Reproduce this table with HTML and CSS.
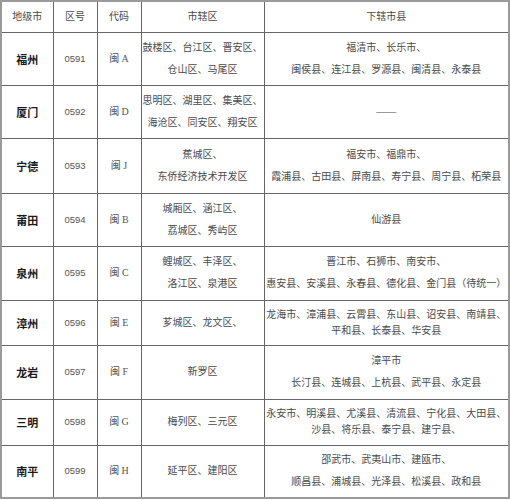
FILE: index.html
```html
<!DOCTYPE html>
<html lang="zh-CN">
<head>
<meta charset="utf-8">
<title>福建省地级市</title>
<link rel="stylesheet" href="styles.css">
</head>
<body>
<table class="fj">
  <colgroup>
    <col class="c1"><col class="c2"><col class="c3"><col class="c4"><col class="c5">
  </colgroup>
  <thead>
    <tr class="h">
      <th>地级市</th><th>区号</th><th>代码</th><th>市辖区</th><th>下辖市县</th>
    </tr>
  </thead>
  <tbody>
    <tr class="r53">
      <td class="city">福州</td><td class="num">0591</td><td class="code">闽 A</td>
      <td>鼓楼区、台江区、晋安区、<br>仓山区、马尾区</td>
      <td>福清市、长乐市、<br>闽侯县、连江县、罗源县、闽清县、永泰县</td>
    </tr>
    <tr class="r53">
      <td class="city">厦门</td><td class="num">0592</td><td class="code">闽 D</td>
      <td>思明区、湖里区、集美区、<br>海沧区、同安区、翔安区</td>
      <td>——</td>
    </tr>
    <tr class="r55">
      <td class="city">宁德</td><td class="num">0593</td><td class="code">闽 J</td>
      <td>蕉城区、<br>东侨经济技术开发区</td>
      <td>福安市、福鼎市、<br>霞浦县、古田县、屏南县、寿宁县、周宁县、柘荣县</td>
    </tr>
    <tr class="r53">
      <td class="city">莆田</td><td class="num">0594</td><td class="code">闽 B</td>
      <td>城厢区、涵江区、<br>荔城区、秀屿区</td>
      <td>仙游县</td>
    </tr>
    <tr class="r54">
      <td class="city">泉州</td><td class="num">0595</td><td class="code">闽 C</td>
      <td>鲤城区、丰泽区、<br>洛江区、泉港区</td>
      <td>晋江市、石狮市、南安市、<br>惠安县、安溪县、永春县、德化县、金门县（待统一）</td>
    </tr>
    <tr class="r45">
      <td class="city">漳州</td><td class="num">0596</td><td class="code">闽 E</td>
      <td>芗城区、龙文区、</td>
      <td class="tight">龙海市、漳浦县、云霄县、东山县、诏安县、南靖县、<br>平和县、长泰县、华安县</td>
    </tr>
    <tr class="r54">
      <td class="city">龙岩</td><td class="num">0597</td><td class="code">闽 F</td>
      <td>新罗区</td>
      <td>漳平市<br>长汀县、连城县、上杭县、武平县、永定县</td>
    </tr>
    <tr class="r46">
      <td class="city">三明</td><td class="num">0598</td><td class="code">闽 G</td>
      <td>梅列区、三元区</td>
      <td class="tight">永安市、明溪县、尤溪县、清流县、宁化县、大田县、<br>沙县、将乐县、泰宁县、建宁县、</td>
    </tr>
    <tr class="r53">
      <td class="city">南平</td><td class="num">0599</td><td class="code">闽 H</td>
      <td>延平区、建阳区</td>
      <td>邵武市、武夷山市、建瓯市、<br>顺昌县、浦城县、光泽县、松溪县、政和县</td>
    </tr>
  </tbody>
</table>
</body>
</html>
```
FILE: styles.css
```css
html, body {
  margin: 0;
  padding: 0;
  background: #ffffff;
}
.fj {
  border-collapse: collapse;
  table-layout: fixed;
  width: 508px;
  margin: 0;
  border: 2px solid #9a9a9a;
  font-family: "Liberation Serif", "Noto Sans CJK SC", serif;
  font-size: 10px;
  color: #4a4a4a;
}
.c1 { width: 52px; }
.c2 { width: 44px; }
.c3 { width: 44px; }
.c4 { width: 123px; }
.c5 { width: 245px; }
.fj th, .fj td {
  border: 1px solid #666666;
  padding: 0;
  text-align: center;
  vertical-align: middle;
  line-height: 22px;
  white-space: nowrap;
  overflow: visible;
}
.fj th {
  font-weight: normal;
  color: #4a4a4a;
}
.h { height: 31px; }
.r53 { height: 53px; }
.r54 { height: 54px; }
.r55 { height: 55px; }
.r45 { height: 45px; }
.r46 { height: 46px; }
.fj td.city {
  font-family: "Noto Sans CJK SC", sans-serif;
  font-weight: bold;
  font-size: 11px;
  color: #1a1a1a;
}
.fj td.num {
  font-family: "Liberation Sans", "Noto Sans", sans-serif;
  font-size: 9.5px;
  color: #555555;
}
.fj td.code {
  color: #555555;
}
.fj td.tight {
  line-height: 16px;
}
```
